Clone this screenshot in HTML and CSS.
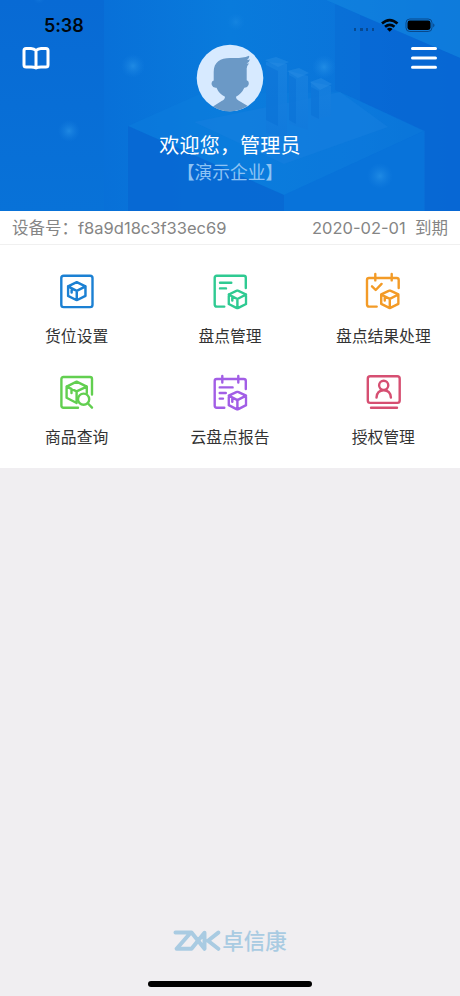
FILE: index.html
```html
<!DOCTYPE html>
<html lang="zh-CN">
<head>
<meta charset="utf-8">
<title>库存盘点</title>
<link rel="stylesheet" href="styles.css">
</head>
<body>
<svg class="defs" aria-hidden="true">
  <symbol id="cube" viewBox="0 0 20 20"><path d="M10 1.2 18.5 5.2V14.5L10 18.8 1.5 14.5V5.2ZM1.5 5.2 10 9.6 18.5 5.2M10 9.6V18.8M5 7.4V11.2"/></symbol>
</svg>
<div class="screen">
  <header class="hero">
    <svg class="backdrop" viewBox="0 0 460 211" preserveAspectRatio="none" aria-hidden="true">
      <defs>
        <linearGradient id="base" x1="0" x2="1"><stop offset="0" stop-color="#086bd5"/><stop offset=".22" stop-color="#0870d8"/><stop offset=".5" stop-color="#097bdc"/><stop offset=".78" stop-color="#0a74da"/><stop offset="1" stop-color="#086bd5"/></linearGradient>
        <linearGradient id="side" x1="0" y1="0" x2="0" y2="1"><stop offset="0" stop-color="#086ad4"/><stop offset="1" stop-color="#0872d8"/></linearGradient>
        <linearGradient id="face" x1="0" y1="0" x2="0" y2="1"><stop offset="0" stop-color="#1a82df"/><stop offset="1" stop-color="#1079dc"/></linearGradient>
        <radialGradient id="glow"><stop offset="0" stop-color="#36a1ee" stop-opacity=".5"/><stop offset="1" stop-color="#1e88e5" stop-opacity="0"/></radialGradient>
      </defs>
      <path fill="url(#base)" d="M0 0H460V211H0z"/>
      <path fill="url(#side)" d="M0 0H104V211H0z"/>
      <path fill="#1285df" opacity=".6" d="M326 0H460V58z"/>
      <path fill="#0866d2" opacity=".35" d="M326 0 360 15V101L335 90V4z"/>
      <path fill="#0867d3" opacity=".8" d="M360 15 460 58V211H425V131L360 101z"/>
      <path fill="#0d7fdd" opacity=".45" d="M128 126 200 94 340 92 424 131 284 195z"/>
      <path fill="#0866d2" opacity=".8" d="M128 126 284 195V211H128z"/>
      <path fill="#0873da" d="M284 195 424 131V211H284z"/>
      <path fill="#1780df" opacity=".5" d="M194 122 340 92 388 127 284 164z"/>
      <path fill="url(#face)" opacity=".8" d="M266 62 287 64V137L266 133zM289 71 308 76V130L289 124zM311 82 331 86V116L311 120z"/>
      <path fill="#086fd6" opacity=".5" d="M266 65 278 71V126L266 120zM289 75 296 79V124L289 120zM311 87 319 91V119L311 115z"/>
      <path fill="#2a8ee4" opacity=".45" d="M265 60 276 57 289 62 278 67zM287 71 299 68 309 73 298 78zM310 82 321 78 332 84 320 90z"/>
      <g fill="url(#glow)"><circle cx="69" cy="131" r="11"/><circle cx="133" cy="66" r="12"/><circle cx="380" cy="176" r="13"/><circle cx="324" cy="67" r="12"/><circle cx="236" cy="22" r="9" opacity=".5"/><circle cx="39" cy="-2" r="6" opacity=".5"/></g>
    </svg>
    <div class="status">
      <span class="clock">5:38</span>
      <svg class="signals" viewBox="0 0 84 18" width="84" height="18" aria-hidden="true">
        <g fill="#07386f" opacity=".65"><rect x="1" y="11" width="2" height="3"/><rect x="7" y="11" width="3" height="3"/><rect x="13" y="11" width="2" height="3"/><rect x="19" y="11" width="2" height="3"/></g>
        <g fill="none" stroke="#00070e" stroke-width="2.7"><path d="M29 6.5Q36.7-.4 44.5 6.5"/><path d="M32 9.8Q36.7 5.9 41.5 9.8"/></g>
        <path d="M33.9 12Q36.7 9.7 39.5 12L36.7 14.8z"/>
        <rect x="53" y="2" width="26" height="12.5" rx="3.8" fill="none" stroke="#08488a"/>
        <rect x="54.5" y="3.5" width="23" height="9.5" rx="2.4"/>
        <path d="M80.2 6.2Q82.8 8.2 80.2 10.4z" fill="#08488a"/>
      </svg>
    </div>
    <div class="bar">
      <svg width="28" height="24" viewBox="0 0 28 24" fill="none" stroke="#fff" stroke-width="3" stroke-linejoin="round" aria-hidden="true"><path d="M14 4.5Q12 2.4 9 2.4H4.1Q2 2.4 2 4.5V19Q2 21 4.1 21H9Q12 21 14 22Q16 21 19 21H23.9Q26 21 26 19V4.5Q26 2.4 23.9 2.4H19Q16 2.4 14 4.5V21.5"/></svg>
      <svg width="28" height="24" viewBox="0 0 28 24" stroke="#fff" stroke-width="3" stroke-linecap="round" aria-hidden="true"><path d="M2.5 2.5H25.5M2.5 12H25.5M2.5 21.3H25.5"/></svg>
    </div>
    <div class="profile">
      <svg class="avatar" viewBox="0 0 68 68" width="68" height="68" aria-hidden="true">
        <circle cx="34" cy="34" r="33.3" fill="#d7eaff"/>
        <path fill="#6b99c6" d="M17.7 36.5V28C17.7 18 24.5 14 34 14C41 14 47 14.5 53 11.8Q54 13.8 51 16Q53.4 16 54 15.2Q53.5 18 50.6 19.6L53 19.4Q50.5 22 50.7 25V36.2Q53.6 37 52.5 41Q51.3 44 48.3 43.8Q45.5 50 40 52.7Q39.8 55.3 42.5 56.5L51.8 62.1C40.5 69.3 27.5 69.1 17 62.4L25.6 57Q29 55.6 29 52.8Q23 50 20.5 43.8Q17 44.3 15.8 41Q14.8 37.5 17.7 36.5Z"/>
      </svg>
      <h1 class="welcome">欢迎您，管理员</h1>
      <p class="company">【演示企业】</p>
    </div>
  </header>
  <section class="device"><span class="serial">设备号：f8a9d18c3f33ec69</span><span class="expiry">2020-02-01&nbsp; 到期</span></section>
  <main class="menu">
    <a class="tile blue"><svg class="icon" viewBox="0 0 40 40"><rect x="4.3" y="4.7" width="31.2" height="31.4" rx="2.4"/><use href="#cube" x="9.5" y="10" width="20.5" height="20.5"/></svg><span>货位设置</span></a>
    <a class="tile green"><svg class="icon" viewBox="0 0 40 40"><path d="M14.3 35.6H6.7Q4.7 35.6 4.7 33.6V6.8Q4.7 4.8 6.7 4.8H33.8Q35.8 4.8 35.8 6.8V17M10 11.7H21.3M10 17.4H16"/><use href="#cube" x="17.2" y="18.2" width="20.4" height="20.4"/></svg><span>盘点管理</span></a>
    <a class="tile orange"><svg class="icon" viewBox="0 0 40 40"><path d="M13.7 35.6H6Q4 35.6 4 33.6V9Q4 7 6 7H33.7Q35.7 7 35.7 9V17M12.3 3V9.4M28.7 3V9.4M9 15.3 12.7 19 18.6 12.9"/><use href="#cube" x="16.7" y="18.2" width="20.2" height="20.2"/></svg><span>盘点结果处理</span></a>
    <a class="tile lime"><svg class="icon" viewBox="0 0 40 40"><path d="M21 35.7H6.4Q4.4 35.7 4.4 33.7V7Q4.4 5 6.4 5H33Q35 5 35 7V22.5M9.6 14.6 19.6 9.7 29.8 14.6V21M9.6 14.6V25.7L19.6 31V19.4L9.6 14.6M19.6 19.4 29.8 14.6M14.5 17V21"/><circle cx="26.6" cy="27.2" r="5.6" fill="#fff"/><path d="M31 31.5 35 35.7"/></svg><span>商品查询</span></a>
    <a class="tile purple"><svg class="icon" viewBox="0 0 40 40"><path d="M14.3 35.7H6.7Q4.7 35.7 4.7 33.7V9Q4.7 7 6.7 7H33.8Q35.8 7 35.8 9V17M12.3 4V10.5M28.3 4V10.5M9.7 15.4H22.6M9.7 21H15.8M9.7 26.6H13"/><use href="#cube" x="17.2" y="18.4" width="20.4" height="20.4"/></svg><span>云盘点报告</span></a>
    <a class="tile red"><svg class="icon" viewBox="0 0 40 40"><rect x="4.8" y="4.3" width="31.9" height="26.6" rx="2.4"/><circle cx="20.7" cy="13.3" r="4.6"/><path d="M13.5 25.6Q14 18.2 20.7 18.2T27.9 25.6M8 35.8H34"/></svg><span>授权管理</span></a>
  </main>
  <footer class="footer">
    <div class="brand">
      <svg width="49" height="22" viewBox="0 0 49 22" fill="none" stroke="#a9cbe2" stroke-width="4" stroke-linecap="round" stroke-linejoin="round" aria-hidden="true"><path d="M2.5 2.6H18.5L31.5 18.8V2.8L18.5 18.8H3.6L16.5 4M45.3 2.6 35 10.7 45.3 18.8"/></svg>
      <span>卓信康</span>
    </div>
    <div class="home"></div>
  </footer>
</div>
</body>
</html>
```
FILE: styles.css
```css
* { box-sizing: border-box; }
body { margin: 0; font-family: "Noto Sans CJK SC", sans-serif; background: #f0eef1; }
.defs { position: absolute; width: 0; height: 0; }
.screen { width: 460px; height: 996px; display: flex; flex-direction: column; overflow: hidden; }
.hero { position: relative; height: 211px; flex: none; overflow: hidden; background: #086bd5; }
.backdrop { position: absolute; inset: 0; width: 100%; height: 100%; }
.status, .bar, .profile { position: relative; }
.status { height: 44px; padding: 14px 23px 0 44px; display: flex; justify-content: space-between; align-items: flex-start; }
.clock { font: 600 18px/24px Inter, sans-serif; color: #00070e; letter-spacing: -.1px; }
.signals { margin-top: 3px; }
.bar { display: flex; justify-content: space-between; padding: 2px 22px 0 22px; height: 26px; }
.profile { display: flex; flex-direction: column; align-items: center; margin-top: -26px; }
.avatar { display: block; }
.welcome { margin: 18px 0 0; font-size: 20px; line-height: 30px; font-weight: 400; color: #fff; letter-spacing: .2px; }
.company { margin: -2px 0 0; font-size: 17.7px; line-height: 26px; color: #8dc3f4; }
.device { height: 34px; flex: none; display: flex; justify-content: space-between; align-items: center; padding: 0 12px; background: #fff; border-bottom: 1px solid #f0f0f0; color: #858585; font: 16.5px/24px Inter, "Noto Sans CJK SC", sans-serif; white-space: pre; }
.menu { height: 223px; flex: none; background: #fff; display: grid; grid-template-columns: repeat(3, 1fr); grid-auto-rows: 101px; padding-top: 26px; }
.tile { display: flex; flex-direction: column; align-items: center; gap: 13px; font-size: 15.8px; line-height: 24px; color: #333; }
.icon { width: 40px; height: 40px; fill: none; stroke: currentColor; stroke-width: 2.4; stroke-linecap: round; stroke-linejoin: round; }
.tile span { color: #333; }
.blue { color: #1b80d3; }
.green { color: #2fca92; }
.orange { color: #f39b27; }
.lime { color: #62cf50; }
.purple { color: #a25ee6; }
.red { color: #d64f72; }
.footer { flex: 1; display: flex; flex-direction: column; justify-content: flex-end; align-items: center; padding-bottom: 9px; }
.brand { display: flex; align-items: center; height: 28px; margin-bottom: 26px; font-size: 21.5px; line-height: 28px; font-weight: 500; color: #a9cbe2; }
.brand span { margin-top: -2px; }
.home { width: 164px; height: 6px; border-radius: 3px; background: #000; }
```
